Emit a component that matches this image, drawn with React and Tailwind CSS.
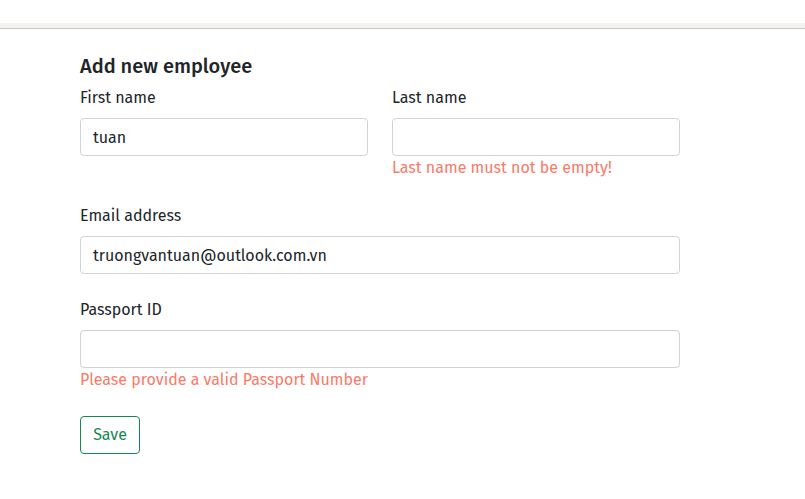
import { useState } from 'react'

const font = { fontFamily: '"Fira Sans", "Noto Sans", "Open Sans", sans-serif' }

const Field = ({ label, value, onChange, error, className = '' }) => (
  <div className={className}>
    <label className="block pt-px text-[16px] leading-6 text-[#212529] mb-2">{label}</label>
    <input
      value={value}
      onChange={(e) => onChange(e.target.value)}
      className="block w-full h-[38px] px-3 text-[16px] text-[#212529] bg-white border border-[#ced4da] rounded-[4px] outline-none"
    />
    {error && <p className="text-[16px] leading-6 text-[#fa7a68]">{error}</p>}
  </div>
)

const App = () => {
  const [first, setFirst] = useState('tuan')
  const [last, setLast] = useState('')
  const [email, setEmail] = useState('truongvantuan@outlook.com.vn')
  const [passport, setPassport] = useState('')

  return (
    <div className="min-h-[499px] bg-white" style={font}>
      <div className="h-[23px] bg-white" />
      <div className="h-[6px] bg-[#f5f3f1] border-b border-[#c9c4bd]" />
      <div className="w-[600px] ml-[80px] pt-[25px]">
        <h2 className="text-[20px] leading-6 font-medium text-[#212529] mb-[7px]">Add new employee</h2>
        <div className="grid grid-cols-2 gap-6">
          <Field label="First name" value={first} onChange={setFirst} />
          <Field label="Last name" value={last} onChange={setLast} error="Last name must not be empty!" />
        </div>
        <Field className="mt-[23px]" label="Email address" value={email} onChange={setEmail} />
        <Field
          className="mt-[23px]"
          label="Passport ID"
          value={passport}
          onChange={setPassport}
          error="Please provide a valid Passport Number"
        />
        <button className="mt-6 h-[38px] w-[60px] text-[16px] text-[#198754] border border-[#198754] rounded-[4px] bg-white">
          Save
        </button>
      </div>
    </div>
  )
}

export default App
